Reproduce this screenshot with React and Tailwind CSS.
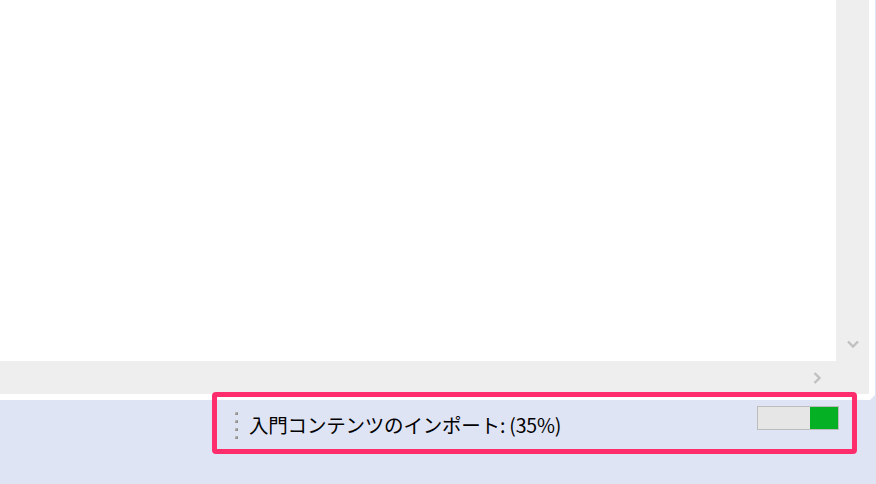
import React from "react";

const Chevron = ({ dir }) => (
  <svg width="12" height="12" viewBox="0 0 12 12">
    <path
      d={dir === "down" ? "M1 3.5 L6 8.5 L11 3.5" : "M3.5 1 L8.5 6 L3.5 11"}
      fill="none"
      stroke="#c0c0c0"
      strokeWidth="2.4"
    />
  </svg>
);

const Grip = () => (
  <div className="flex flex-col gap-[5px] pt-[6px]">
    {[0, 1, 2, 3].map((i) => (
      <div key={i} className="h-[3px] w-[3px] bg-gradient-to-br from-[#c8c8c8] to-[#7a7a7a]" />
    ))}
  </div>
);

export default function App() {
  const progress = 35;

  return (
    <div className="relative h-[484px] w-[876px] overflow-hidden bg-[#dfe4f5]" style={{ fontFamily: '"Noto Sans CJK JP", "Noto Sans", sans-serif' }}>
      {/* ウィンドウ */}
      <div className="h-[400px] w-[875px] bg-white pr-[6px] pb-[6px] [clip-path:polygon(0_0,100%_0,100%_395px,870px_100%,0_100%)]">
        <div className="grid h-[394px] grid-cols-[836px_33px] grid-rows-[361px_33px] bg-[#eeeeee]">
          <div className="bg-white" />
          <div className="flex items-end justify-center pb-[11px]">
            <Chevron dir="down" />
          </div>
          <div className="flex items-center justify-end pr-[13px]">
            <Chevron dir="right" />
          </div>
          <div />
        </div>
      </div>

      {/* ステータスバー */}
      <div className="flex h-[84px] items-start pt-[5px]">
        <div className="ml-[235px] pt-[1px]">
          <Grip />
        </div>
        <div className="ml-[11px] pt-[6px] text-[19.5px] leading-[28px] tracking-[-0.2px] text-black">
          入門コンテンツのインポート: ({progress}%)
        </div>
        <div className="ml-auto mr-[37px] mt-[1px] flex h-[24px] w-[82px] justify-end border border-[#bcbcbc] bg-[#e6e6e6]">
          <div className="h-full bg-[#06b025]" style={{ width: `${progress}%` }} />
        </div>
      </div>

      {/* 注釈の枠 */}
      <div className="absolute left-[212px] top-[392px] h-[62px] w-[645px] rounded-[4px] border-[5px] border-[#ff2d6b]" />
    </div>
  );
}
